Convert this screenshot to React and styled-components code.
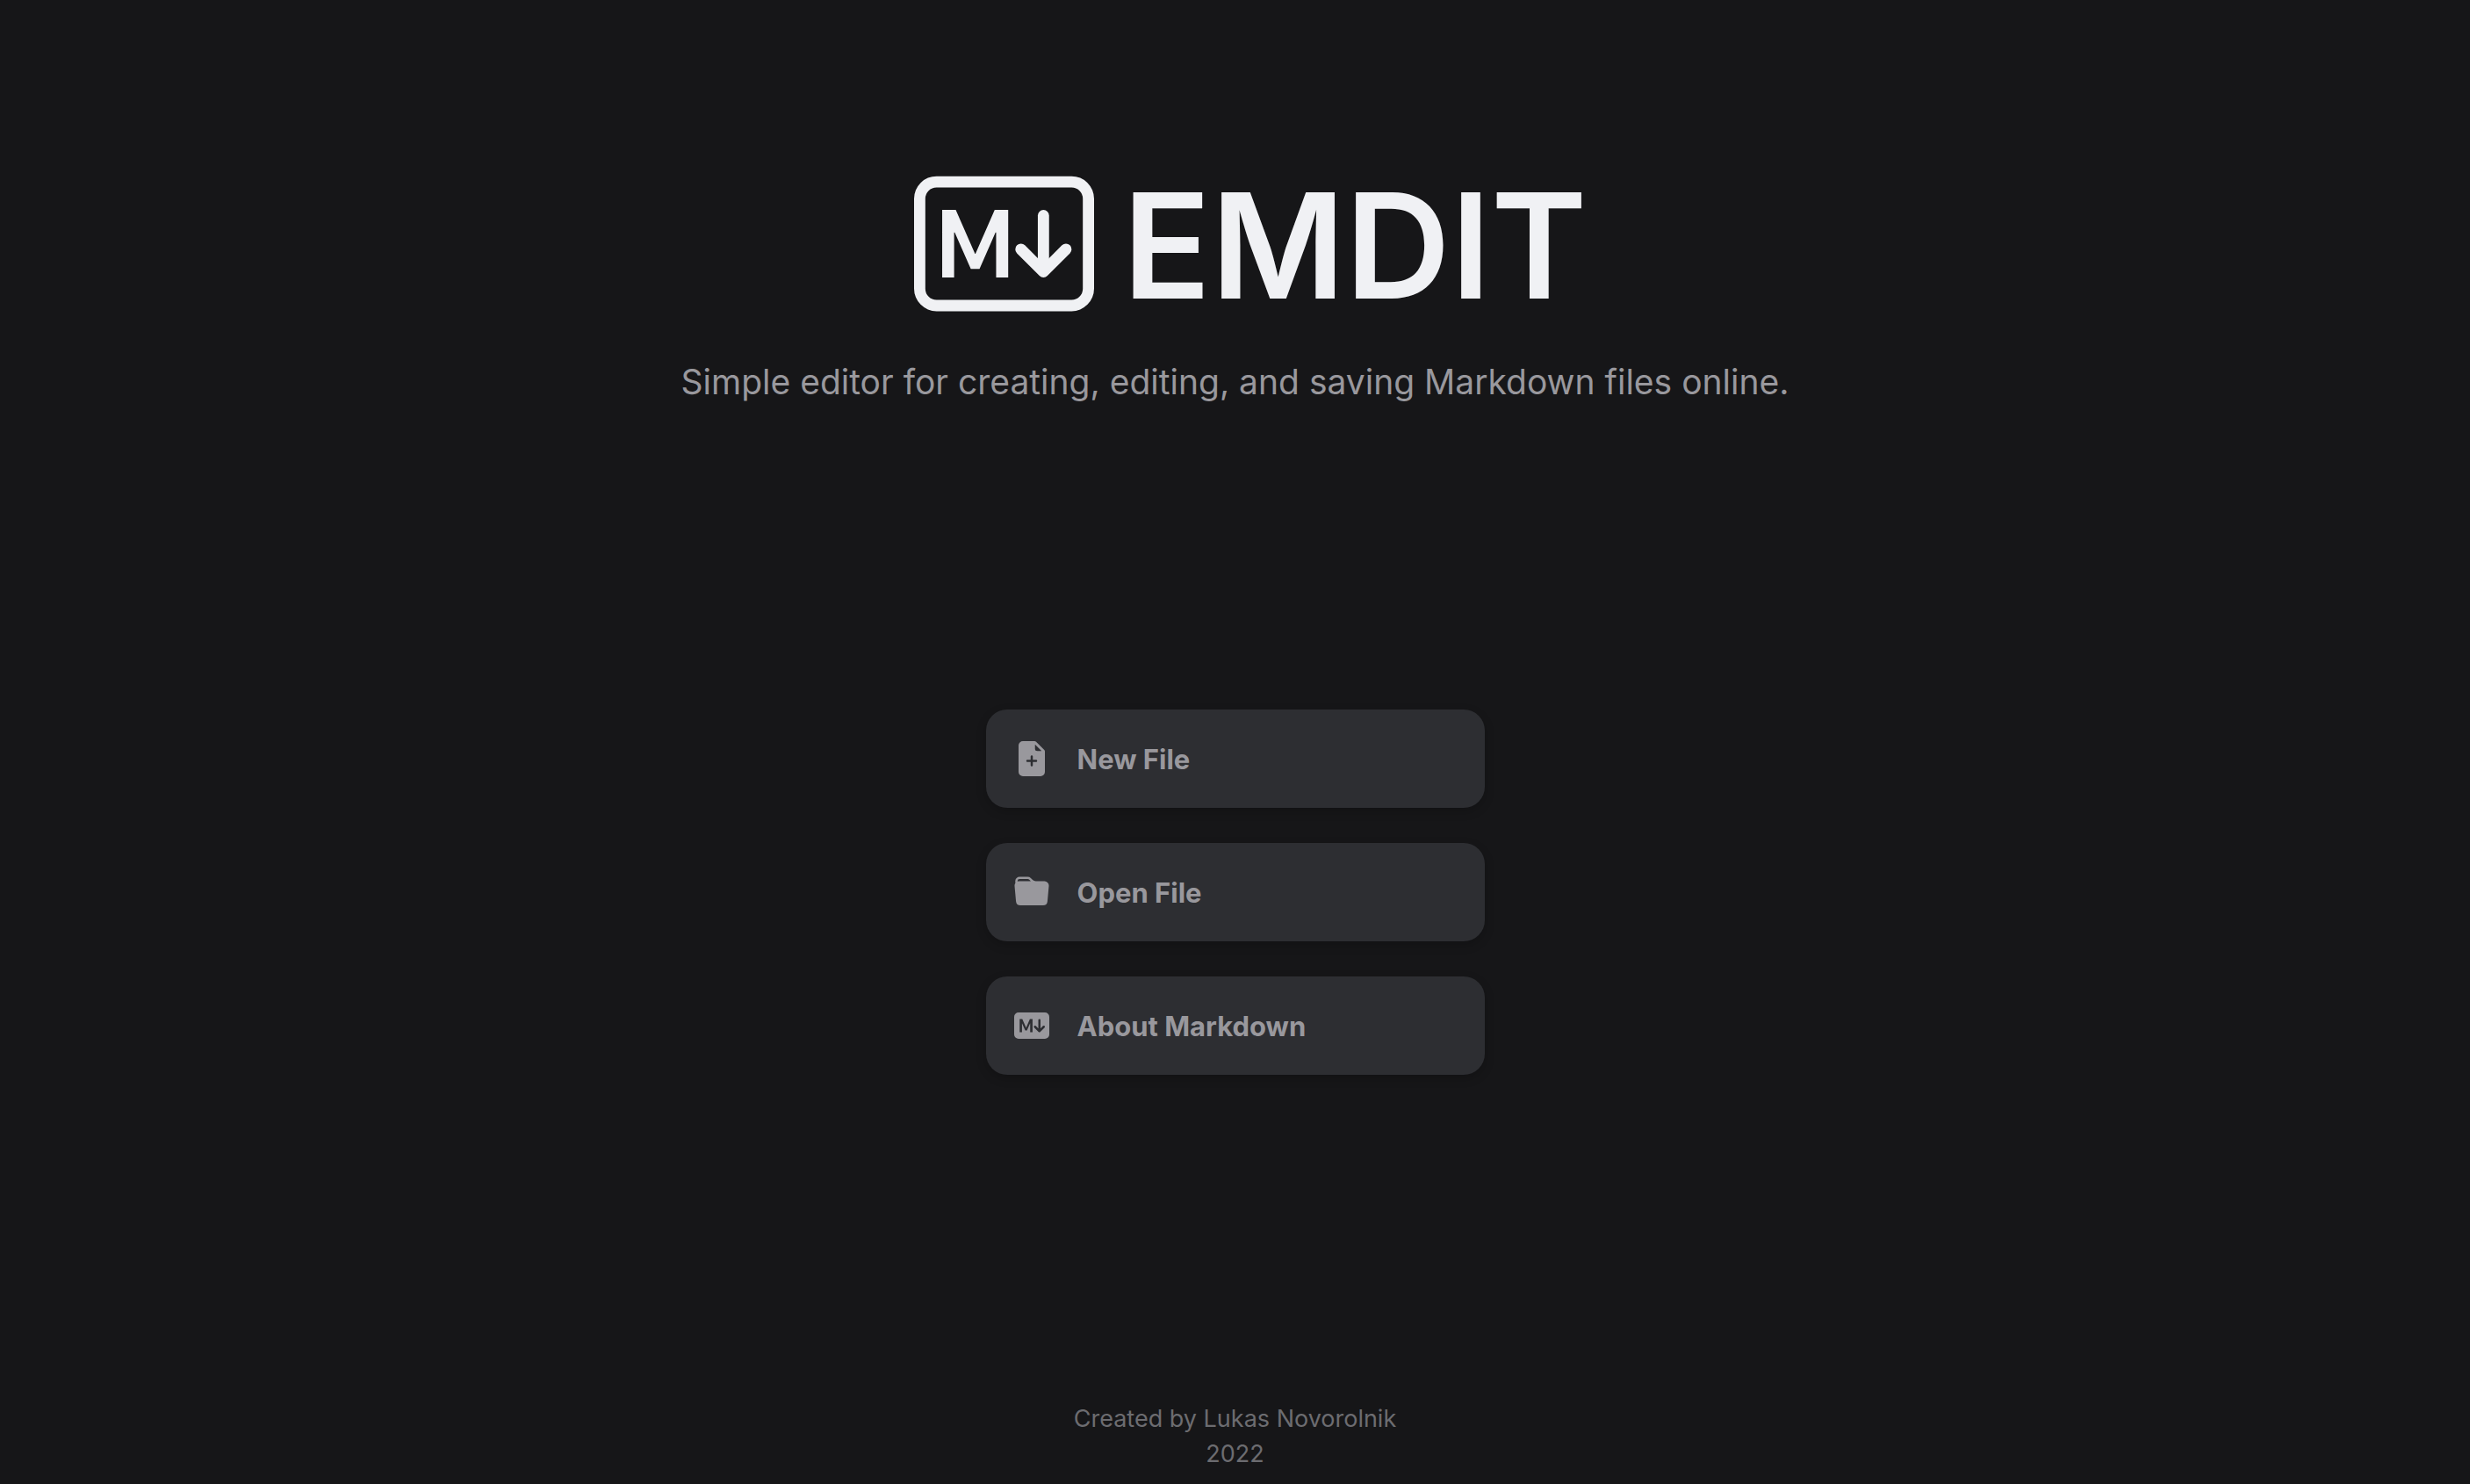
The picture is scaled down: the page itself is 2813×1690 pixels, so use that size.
import React from "react";
import styled, { createGlobalStyle } from "styled-components";
import {
  BsFileEarmarkPlusFill,
  BsFolderFill,
  BsMarkdown,
  BsMarkdownFill,
} from "react-icons/bs";

const Global = createGlobalStyle`
  * { box-sizing: border-box; }
  body {
    margin: 0;
    background: #161618;
    font-family: Inter, "Liberation Sans", sans-serif;
  }
`;

const Page = styled.div`
  min-height: 100vh;
  display: flex;
  flex-direction: column;
  align-items: center;
  justify-content: space-between;
  padding: 175px 32px 14px;
`;

const Header = styled.header`
  display: flex;
  flex-direction: column;
  align-items: center;
  gap: 24px;
`;

const Brand = styled.div`
  display: flex;
  align-items: flex-start;
  gap: 32px;
  padding-left: 36px;
  color: #f0f1f4;
`;

const Logo = styled(BsMarkdown)`
  width: 205px;
  height: 205px;
`;

const Title = styled.h1`
  margin: 0;
  font-size: 166px;
  line-height: 210px;
  font-weight: 600;
`;

const Tagline = styled.p`
  margin: 0;
  color: #99989d;
  font-size: 39px;
  line-height: 52px;
`;

const Actions = styled.nav`
  display: flex;
  flex-direction: column;
  gap: 40px;
  width: 568px;
  max-width: 100%;
`;

const Action = styled.button`
  display: flex;
  align-items: center;
  gap: 32px;
  height: 112px;
  padding: 0 32px;
  border: 0;
  border-radius: 24px;
  background: #2d2e32;
  box-shadow: 0 4px 12px rgba(0, 0, 0, 0.2);
  color: #99989d;
  font: inherit;
  font-size: 31px;
  font-weight: 700;
  cursor: pointer;

  svg {
    width: 40px;
    height: 40px;
  }
`;

const Footer = styled.footer`
  padding-top: 25px;
  color: #6c6c70;
  font-size: 27px;
  line-height: 40px;
  text-align: center;
`;

const actions = [
  { label: "New File", Glyph: BsFileEarmarkPlusFill },
  { label: "Open File", Glyph: BsFolderFill },
  { label: "About Markdown", Glyph: BsMarkdownFill },
];

export default function App() {
  return (
    <>
      <Global />
      <Page>
        <Header>
          <Brand>
            <Logo aria-hidden="true" />
            <Title>EMDIT</Title>
          </Brand>
          <Tagline>Simple editor for creating, editing, and saving Markdown files online.</Tagline>
        </Header>
        <Actions aria-label="Start">
          {actions.map(({ label, Glyph }) => (
            <Action key={label} type="button">
              <Glyph aria-hidden="true" />
              {label}
            </Action>
          ))}
        </Actions>
        <Footer>
          <div>Created by Lukas Novorolnik</div>
          <div>2022</div>
        </Footer>
      </Page>
    </>
  );
}
